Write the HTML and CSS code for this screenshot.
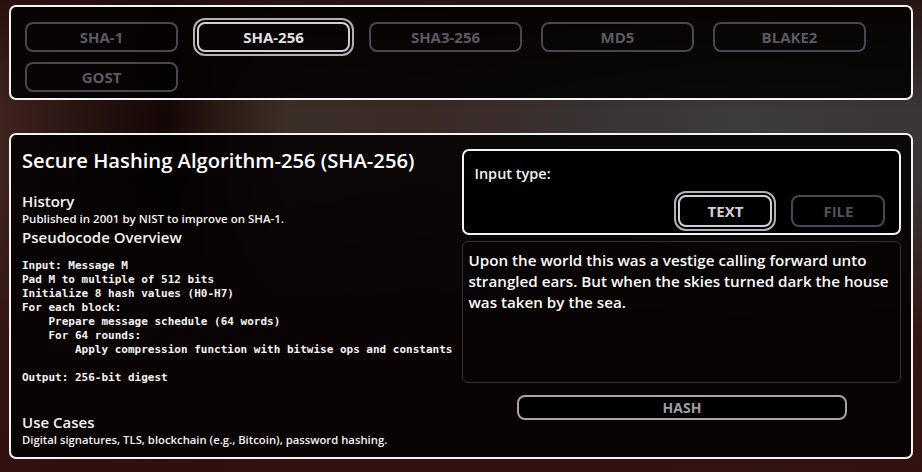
FILE: index.html
```html
<!DOCTYPE html>
<html lang="en">
<head>
<meta charset="utf-8">
<title>Hash Explorer</title>
<link rel="stylesheet" href="styles.css">
</head>
<body>
<div class="app">
  <nav class="card algos">
    <button class="algo">SHA-1</button>
    <button class="algo selected">SHA-256</button>
    <button class="algo">SHA3-256</button>
    <button class="algo">MD5</button>
    <button class="algo">BLAKE2</button>
    <button class="algo">GOST</button>
  </nav>
  <main class="card detail">
    <section class="info">
      <h1 class="title">Secure Hashing Algorithm-256 (SHA-256)</h1>
      <h2 class="heading history">History</h2>
      <p class="small">Published in 2001 by NIST to improve on SHA-1.</p>
      <h2 class="heading pseudo">Pseudocode Overview</h2>
<pre class="code">Input: Message M
Pad M to multiple of 512 bits
Initialize 8 hash values (H0-H7)
For each block:
    Prepare message schedule (64 words)
    For 64 rounds:
        Apply compression function with bitwise ops and constants

Output: 256-bit digest</pre>
      <h2 class="heading uses">Use Cases</h2>
      <p class="small uses-text">Digital signatures, TLS, blockchain (e.g., Bitcoin), password hashing.</p>
    </section>
    <section class="work">
      <div class="input-type">
        <div class="label">Input type:</div>
        <div class="types">
          <button class="type selected">TEXT</button>
          <button class="type">FILE</button>
        </div>
      </div>
      <textarea class="message" spellcheck="false">Upon the world this was a vestige calling forward unto strangled ears. But when the skies turned dark the house was taken by the sea.</textarea>
      <button class="hash">HASH</button>
    </section>
  </main>
</div>
</body>
</html>
```
FILE: styles.css
```css
* { box-sizing: border-box; }

html, body {
  margin: 0;
  height: 100%;
}

body {
  font-family: "Open Sans", "Noto Sans", sans-serif;
  color: #f2f0f2;
  background:
    linear-gradient(to bottom, rgba(38, 14, 14, 0.85) 0, rgba(38, 14, 14, 0) 110px),
    linear-gradient(to bottom, rgba(48, 18, 14, 0) 180px, rgba(52, 20, 16, 0.9) 330px, rgba(48, 16, 14, 0.95) 472px),
    linear-gradient(to right, #3f2420 0%, #2a1512 8%, #130806 18%, #2e1d17 25%, #3b2e27 31%, #3a2a26 46%, #393131 62%, #3d3b3b 80%, #3b3535 100%);
}

.app {
  padding: 5px 9px;
  display: flex;
  flex-direction: column;
  gap: 33px;
}

.card {
  border: 2px solid #f4f2f4;
  border-radius: 7px;
  background: rgba(2, 1, 1, 0.86);
}

/* algorithm selector */
.algos {
  height: 95px;
  padding: 15px 14px 6px;
  display: flex;
  flex-wrap: wrap;
  align-content: flex-start;
  gap: 10px 19px;
}

button {
  font-family: "Open Sans", "Noto Sans", sans-serif;
  font-weight: 700;
  background: transparent;
  cursor: pointer;
  padding: 0;
}

.algo {
  width: 153px;
  height: 30px;
  border: 2px solid #4a4552;
  border-radius: 8px;
  color: #5d5866;
  font-size: 15px;
}

.type {
  width: 94px;
  height: 32px;
  border: 2px solid #4a4552;
  border-radius: 8px;
  color: #55505c;
  font-size: 15px;
}

.algo.selected,
.type.selected {
  border-color: #d2ccd7;
  color: #e2dee5;
  outline: 2px solid #b4aeb9;
  outline-offset: 2px;
}

.type.selected { color: #d4d0d8; }

/* detail */
.detail {
  height: 326px;
  padding: 0 10px 0 11px;
  display: grid;
  grid-template-columns: 1fr 439px;
  column-gap: 10px;
}

.info {
  padding-top: 13px;
}

.title {
  margin: 0;
  font-size: 20.2px;
  line-height: 24px;
  font-weight: 600;
  color: #ffffff;
}

.heading {
  margin: 0;
  font-size: 15px;
  line-height: 20px;
  font-weight: 600;
  color: #f4f2f4;
}

.history { margin-top: 19px; }
.pseudo { margin-top: 1px; }
.uses { margin-top: 27px; }

.small {
  margin: 0;
  font-size: 11.5px;
  line-height: 15px;
  font-weight: 600;
  color: #f4f2f4;
}

.uses-text { font-size: 11.3px; }

.code {
  margin: 12px 0 0;
  font-family: "DejaVu Sans Mono", "Liberation Mono", monospace;
  font-size: 11px;
  line-height: 14px;
  font-weight: 700;
  color: #f4f2f4;
}

/* work area */
.work {
  padding-top: 14px;
  display: flex;
  flex-direction: column;
  align-items: center;
}

.input-type {
  width: 100%;
  height: 86px;
  border: 2px solid #f4f2f4;
  border-radius: 7px;
  background: #000;
  padding: 13px 14px 6px 10px;
}

.label {
  font-size: 14.5px;
  line-height: 19px;
  font-weight: 600;
  color: #f2f0f2;
}

.types {
  margin-top: 12px;
  display: flex;
  justify-content: flex-end;
  gap: 19px;
}

.message {
  display: block;
  width: 100%;
  height: 142px;
  margin-top: 6px;
  padding: 8px 3px 4px 5px;
  border: 1px solid #383131;
  border-radius: 6px;
  background: rgba(8, 3, 3, 0.55);
  color: #fbfafb;
  font-family: "Open Sans", "Noto Sans", sans-serif;
  font-size: 15.2px;
  line-height: 21px;
  font-weight: 600;
  resize: none;
  outline: none;
  overflow: hidden;
}

.hash {
  margin-top: 12px;
  width: 75%;
  height: 25px;
  border: 2px solid #a9a3ae;
  border-radius: 8px;
  background: #000;
  color: #a09ba6;
  font-size: 14px;
}
```
